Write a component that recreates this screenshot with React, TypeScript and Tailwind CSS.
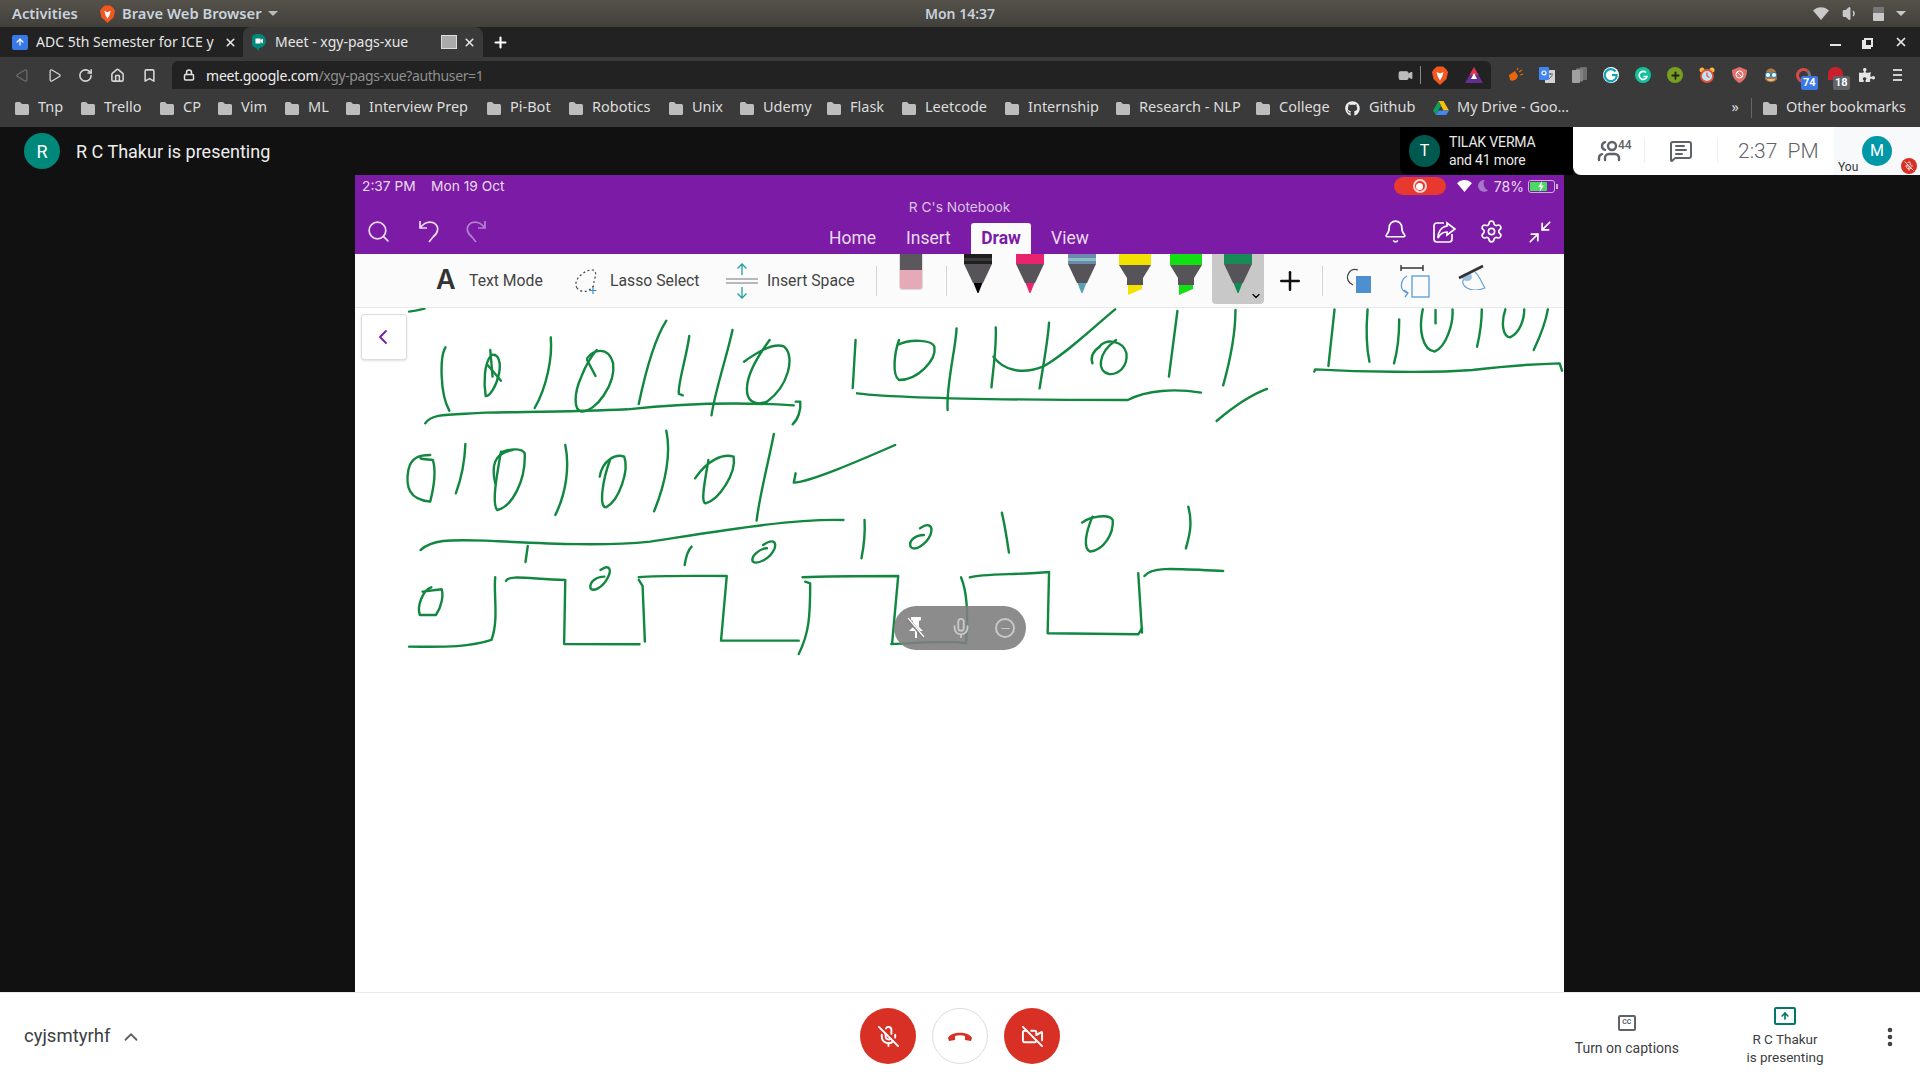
import { Bell, ChevronLeft, ChevronUp, Minimize2, Search, Settings, Plus, X, Lock, Home, Bookmark, RotateCw, Play, MessageSquareText, Users, MicOff, VideoOff, Video, Mic, Minus, Volume1, EllipsisVertical, ArrowUp } from "lucide-react";
import { FaGithub, FaPuzzlePiece } from "react-icons/fa";

const ubuntu = "font-['Noto_Sans',sans-serif]";

const bookmarks = [
	{ name: "Tnp", cls: "w-[43px]" },
	{ name: "Trello", cls: "w-[56px]" },
	{ name: "CP", cls: "w-[35px]" },
	{ name: "Vim", cls: "w-[44px]" },
	{ name: "ML", cls: "w-[38px]" },
	{ name: "Interview Prep", cls: "w-[118px]" },
	{ name: "Pi-Bot", cls: "w-[59px]" },
	{ name: "Robotics", cls: "w-[77px]" },
	{ name: "Unix", cls: "w-[48px]" },
	{ name: "Udemy", cls: "w-[64px]" },
	{ name: "Flask", cls: "w-[52px]" },
	{ name: "Leetcode", cls: "w-[80px]" },
	{ name: "Internship", cls: "w-[88px]" },
	{ name: "Research - NLP", cls: "w-[117px]" },
	{ name: "College", cls: "w-[67px]" },
];

const ZOOM_A = [
	"M50 35 Q70 32 90 26",
	"M145 142 C130 170 130 280 155 332",
	"M262 150 L268 230",
	"M265 165 C285 160 290 190 285 220 C278 260 260 290 250 288 C245 250 245 190 265 165",
	"M255 195 L290 242",
	"M420 112 C425 170 410 260 378 324",
	"M515 175 C530 150 570 135 583 190 C590 250 540 335 500 335 C480 330 480 280 500 230 C510 200 525 170 540 150",
	"M515 180 L537 228",
	"M722 62 C690 120 665 230 650 312",
	"M782 108 C775 170 750 260 755 282 L765 286",
	"M895 90 C880 170 850 270 840 346",
	"M925 185 C950 165 1000 125 1030 140 C1060 170 1040 260 985 305 C950 320 930 300 933 260 C935 220 960 170 992 120",
	"M92 370 C110 340 150 345 250 338 C400 335 500 335 620 328 C750 312 900 305 1055 316",
	"M1060 305 L1072 305 C1075 330 1065 360 1052 373",
	"M105 465 C80 465 55 470 48 510 C40 560 50 600 105 605 C115 560 120 510 112 480 C95 478 85 478 80 475",
	"M197 432 C195 490 185 540 172 580",
	"M320 450 C270 460 265 500 275 550",
	"M290 455 C280 520 265 610 280 630 C320 620 355 540 352 460 C345 445 320 445 295 455",
	"M458 435 C470 500 460 580 432 645",
	"M548 530 C555 480 590 460 612 470 C625 510 600 600 565 622 C545 625 555 540 575 480",
	"M722 392 C735 460 720 550 690 634",
	"M797 535 C830 480 870 460 898 470 C905 520 860 600 825 610 C810 610 825 530 832 480",
	"M1003 402 C990 480 965 590 958 662",
	"M1060 520 L1055 548 C1100 545 1230 480 1320 435",
	"M80 750 C110 720 150 718 250 722 C400 730 550 740 680 725 C850 695 1050 655 1185 660",
	"M360 738 L354 786",
	"M788 740 C775 755 772 780 770 795",
	"M975 735 C1000 715 1010 725 1005 745 C995 775 960 795 948 785 C942 770 965 745 985 745",
	"M1240 660 C1242 700 1238 740 1232 775",
	"M1385 685 C1410 665 1420 680 1412 705 C1400 735 1370 755 1360 740 C1355 720 1375 705 1395 705",
	"M108 862 C85 870 70 920 78 945 L120 945 C135 920 140 885 135 868 L85 875",
	"M275 832 C270 880 285 960 265 1020 C200 1045 120 1040 50 1040",
	"M303 843 C310 825 350 835 458 840 L455 1032 L652 1033",
	"M550 810 C575 790 580 810 568 835 C555 865 530 875 524 865 C520 845 540 830 560 830",
	"M650 840 L660 858 L666 1025",
	"M650 832 C700 826 800 828 880 828 L865 1022 L1068 1022",
	"M1078 832 C1150 828 1250 828 1328 828 L1312 1030",
	"M1085 845 L1098 850 C1098 950 1095 1000 1068 1062",
	"M1492 832 C1510 880 1510 960 1505 1030 C1450 1020 1380 1030 1310 1032",
];

const ZOOM_B = [
	"M33 120 L27 264",
	"M122 135 C150 115 195 120 200 140 C205 180 165 240 125 240 C110 225 115 160 125 120",
	"M247 85 C245 150 225 250 228 330",
	"M36 280 C110 292 250 300 610 300 C650 270 710 265 765 278",
	"M330 82 C332 140 325 200 321 262",
	"M443 68 C440 130 430 200 423 265",
	"M325 170 C345 210 385 225 430 200 C480 160 530 90 583 28",
	"M550 140 C560 115 600 120 607 160 C610 200 590 225 570 222 C545 215 545 160 585 120",
	"M550 140 C535 155 530 170 535 190",
	"M715 33 L697 230",
	"M838 30 C838 100 825 190 812 256",
	"M798 363 C830 325 870 285 905 267",
	"M1048 28 L1035 198",
	"M1118 28 C1115 80 1115 140 1122 185",
	"M1185 58 C1185 110 1180 160 1174 190",
	"M1235 28 C1225 90 1235 150 1260 155 C1285 140 1300 70 1298 28",
	"M1262 30 L1262 70",
	"M1360 28 C1360 70 1355 110 1350 140",
	"M1410 28 C1400 70 1405 110 1420 112 C1440 100 1450 60 1450 28",
	"M1500 28 C1495 70 1480 120 1470 150",
	"M1005 215 L1007 208 C1100 215 1250 220 1340 210 C1400 200 1470 192 1525 190 L1530 212",
	"M343 638 C350 680 355 730 358 758",
	"M513 668 C530 650 570 640 578 660 C580 700 560 750 530 755 C515 745 520 700 535 650",
	"M738 620 C748 670 740 710 733 745",
	"M275 832 C300 820 380 825 443 816 L440 1000 L632 1003 L640 985",
	"M632 820 L640 998",
	"M645 828 C660 800 700 805 812 813",
];

function Folder() {
	return (
		<svg viewBox="0 0 14 13" className="w-[14px] h-[13px] shrink-0" fill="#bdbdbd">
			<path d="M0 1.5 Q0 0 1.5 0 H5 L7 2 H12.5 Q14 2 14 3.5 V11.5 Q14 13 12.5 13 H1.5 Q0 13 0 11.5 Z" />
		</svg>
	);
}

function Brave({ size }: { size: string }) {
	return (
		<svg viewBox="0 0 16 19" className={size}>
			<path d="M2 3 L5 0.5 H11 L14 3 L16 6 L14.5 13 L8 19 L1.5 13 L0 6 Z" fill="#f1571f" />
			<path d="M4.5 6 L8 7.5 L11.5 6 L10 11 L8 14.5 L6 11 Z" fill="#fff" />
		</svg>
	);
}

function Wedge({ size, fill }: { size: string; fill: string }) {
	return (
		<svg viewBox="0 0 16 13" className={size}>
			<path d="M0 3.5 C4.5 -1 11.5 -1 16 3.5 L8 13 Z" fill={fill} />
		</svg>
	);
}

function Pen({ band, tip, wide, mid }: { band: string; tip: string; wide?: boolean; mid?: string }) {
	if (wide) {
		return (
			<svg viewBox="0 0 34 50" className="w-[34px] h-[50px]">
				<rect x="1" y="0" width="32" height="11" fill={band} />
				<path d="M1 11 H33 L25 24 V31 H9 V24 Z" fill="#565458" />
				<path d="M10 31 H24 V35 L10 41 Z" fill={tip} />
			</svg>
		);
	}
	return (
		<svg viewBox="0 0 30 50" className="w-[30px] h-[50px]">
			<rect x="1" y="0" width="28" height="10" fill={band} />
			{mid && <rect x="1" y="4" width="28" height="3" fill={mid} />}
			<path d="M1 10 H29 L20 29 H10 Z" fill="#565458" />
			<path d="M10.5 29 H19.5 L15.5 39 H14.5 Z" fill={tip} />
		</svg>
	);
}

function Ext({ children, badge, badgeCls }: { children: React.ReactNode; badge?: string; badgeCls?: string }) {
	return (
		<div className="relative w-4 h-4 flex items-center justify-center">
			{children}
			{badge && (
				<span className={`absolute left-[6px] top-[9px] h-[14px] px-[2px] rounded-[2px] text-[11px] leading-[14px] font-bold text-white font-['Roboto',sans-serif] ${badgeCls}`}>
					{badge}
				</span>
			)}
		</div>
	);
}

function BookmarkItem({ name, cls }: { name: string; cls: string }) {
	return (
		<div className="flex items-center shrink-0 gap-[9px]">
			<Folder />
			<span className={`${cls} -mt-[2px] whitespace-nowrap`}>{name}</span>
		</div>
	);
}

export default function App() {
	return (
		<div className="w-[1920px] h-[1080px] flex flex-col overflow-hidden bg-[#111111]">
			{/* ubuntu shell bar */}
			<div className={`h-[27px] shrink-0 grid grid-cols-[1fr_auto_1fr] items-center bg-gradient-to-b from-[#55524b] to-[#42403b] text-[#c9d3de] text-[14px] font-semibold ${ubuntu}`}>
				<div className="flex items-center pl-3 text-[14.75px]">
					<span className="w-[88px]">Activities</span>
					<Brave size="w-[15px] h-[18px]" />
					<span className="ml-[7px]">Brave Web Browser</span>
					<span className="ml-[6px] w-0 h-0 border-x-[5px] border-x-transparent border-t-[5px] border-t-[#bbbbbb]" />
				</div>
				<span>Mon 14:37</span>
				<div className="flex items-center justify-end pr-[14px] text-[#c9c9c9]">
					<Wedge size="w-[16px] h-[13px]" fill="#c9c9c9" />
					<Volume1 size={17} className="ml-[13px]" fill="currentColor" />
					<span className="ml-[14px] w-[11px] h-[14px] bg-[linear-gradient(#777_40%,#c9c9c9_40%)] rounded-[1px]" />
					<span className="ml-[12px] w-0 h-0 border-x-[5px] border-x-transparent border-t-[5px] border-t-[#c9c9c9]" />
				</div>
			</div>

			{/* tabs */}
			<div className={`h-[30px] shrink-0 flex items-stretch bg-[#222222] text-[#e6e6e6] text-[14px] ${ubuntu}`}>
				<div className="w-[243px] flex items-center pl-3 relative">
					<div className="w-4 h-[15px] rounded-[2px] bg-[#3b78e7] flex items-center justify-center">
						<ArrowUp size={10} color="#fff" strokeWidth={3} />
					</div>
					<span className="ml-2 -mt-[2px] w-[182px] whitespace-nowrap overflow-hidden">ADC 5th Semester for ICE y</span>
					<X size={13} className="ml-[6px] shrink-0" strokeWidth={3} />
				</div>
				<div className="w-[240px] flex items-center pl-[9px] bg-[#3a3a3a] rounded-t-lg">
					<svg viewBox="0 0 14 17" className="w-[14px] h-[17px]">
						<path d="M7 0 A7 7 0 0 1 7 14 L7 17 L4 14 A7 7 0 0 1 7 0 Z" fill="#00897b" />
						<rect x="3.5" y="4.5" width="5" height="5" fill="#fff" />
						<path d="M8.5 6 L11 4.5 V9.5 L8.5 8 Z" fill="#fff" />
					</svg>
					<span className="ml-[9px] -mt-[2px] w-[166px] whitespace-nowrap">Meet - xgy-pags-xue</span>
					<span className="w-4 h-[14px] border border-[#dddddd] bg-[#aaaaaa]" />
					<X size={13} className="ml-[6px]" strokeWidth={3} />
				</div>
				<Plus size={17} className="ml-[9px] self-center" color="#fff" strokeWidth={3} />
				<div className="ml-auto flex items-center pr-[12px]">
					<span className="w-[11px] h-[2px] mt-[6px] bg-[#e6e6e6]" />
					<span className="ml-[23px] w-[9px] h-[9px] border-2 border-[#e6e6e6] shadow-[-2px_2px_0_#e6e6e6]" />
					<X size={14} className="ml-[21px]" strokeWidth={3} />
				</div>
			</div>

			{/* toolbar */}
			<div className="h-[32px] shrink-0 flex items-end bg-[#3a3a3a] text-[#d6d6d6]">
				<div className="h-[28px] flex items-center pl-[15px] w-[172px]">
					<Play size={15} className="rotate-180 text-[#6e6e6e]" />
					<Play size={15} className="ml-[17px]" />
					<RotateCw size={15} className="ml-4" strokeWidth={2.5} />
					<Home size={15} className="ml-[17px]" strokeWidth={2.5} />
					<Bookmark size={15} className="ml-[17px]" strokeWidth={2.5} />
				</div>
				<div className="h-[28px] w-[1319px] flex items-center rounded-t-md bg-[#222222]">
					<Lock size={12} className="ml-[11px] text-[#e2e2e2]" strokeWidth={3} />
					<span className={`ml-[11px] text-[14px] tracking-[-0.2px] ${ubuntu}`}>
						<span className="text-[#eeeeee]">meet.google.com</span>
						<span className="text-[#8f8f8f] tracking-[-0.4px]">/xgy-pags-xue?authuser=1</span>
					</span>
					<Video size={15} className="ml-auto text-[#bdbdbd]" fill="#bdbdbd" />
					<span className="ml-[7px] w-px h-[18px] bg-[#888888]" />
					<div className="ml-[11px]"><Brave size="w-[16px] h-[19px]" /></div>
					<svg viewBox="0 0 18 16" className="ml-[17px] mr-2 w-[18px] h-4">
						<path d="M9 0 L18 16 H0 Z" fill="#662d91" />
						<path d="M9 0 L13.5 8 H4.5 Z" fill="#e0314b" />
						<path d="M9 6 L12 12 H6 Z" fill="#fff" />
					</svg>
				</div>
				<div className="h-[28px] flex items-center pl-4 gap-4">
					<Ext>
						<svg viewBox="0 0 16 16" className="w-4 h-4" fill="none">
							<path d="M2 8 L8 4 L11 9 C10 13 5 15 3 13 Z" fill="#e8660d" />
							<path d="M10 3 L11 1 M12 5 L15 3 M13 8 L16 7" stroke="#e8660d" strokeWidth="1.2" />
						</svg>
					</Ext>
					<Ext>
						<svg viewBox="0 0 16 16" className="w-4 h-4">
							<rect x="6" y="3" width="10" height="13" fill="#d4d4d4" />
							<path d="M9 7 H14 M11.5 6 V8 M10 12 L13.5 8" stroke="#666" strokeWidth="1" />
							<rect x="0" y="0" width="10" height="13" rx="1" fill="#4285f4" />
							<circle cx="5" cy="6" r="2" fill="none" stroke="#fff" strokeWidth="1.2" />
						</svg>
					</Ext>
					<Ext>
						<svg viewBox="0 0 15 16" className="w-[15px] h-4">
							<rect x="8" y="0" width="7" height="13" rx="1" fill="#6f6f6f" />
							<rect x="4" y="1.5" width="7" height="13" rx="1" fill="#828282" />
							<rect x="0" y="3" width="8" height="13" rx="1" fill="#a0a0a0" />
						</svg>
					</Ext>
					<Ext>
						<svg viewBox="0 0 16 16" className="w-4 h-4" fill="none">
							<circle cx="8" cy="8" r="8" fill="#fff" />
							<path d="M12.5 4.5 A6 6 0 1 0 13.5 10 L13.5 8 H9" stroke="#0fa5b8" strokeWidth="2.2" />
						</svg>
					</Ext>
					<Ext>
						<svg viewBox="0 0 16 16" className="w-4 h-4" fill="none">
							<circle cx="8" cy="8" r="8" fill="#15c39a" />
							<path d="M11 5.5 A4 4 0 1 0 12 9.5 H8.5" stroke="#fff" strokeWidth="1.6" />
						</svg>
					</Ext>
					<Ext><span className="w-4 h-4 rounded-full bg-[#76a01d] flex items-center justify-center"><Plus size={11} strokeWidth={4} color="#222" /></span></Ext>
					<Ext>
						<svg viewBox="0 0 16 16" className="w-4 h-4" fill="none">
							<circle cx="3" cy="3" r="2.5" fill="#f5b93e" />
							<circle cx="13" cy="3" r="2.5" fill="#f5b93e" />
							<circle cx="8" cy="9" r="6" fill="#bfe4f4" stroke="#e8503a" strokeWidth="1.8" />
							<path d="M8 5.5 V9 L10.5 10.5" stroke="#e8503a" strokeWidth="1.2" />
						</svg>
					</Ext>
					<Ext>
						<svg viewBox="0 0 15 16" className="w-[15px] h-4" fill="none">
							<path d="M7.5 0 L15 3 C15 10 12 14 7.5 16 C3 14 0 10 0 3 Z" fill="#e4706c" />
							<circle cx="7.5" cy="7.5" r="3.5" stroke="#fff" strokeWidth="1" />
							<path d="M5 5 L10 10" stroke="#fff" strokeWidth="1" />
						</svg>
					</Ext>
					<Ext>
						<svg viewBox="0 0 14 16" className="w-[14px] h-4" fill="none">
							<path d="M2 6 C2 0 12 0 12 6 L13 12 C11 16 3 16 1 12 Z" fill="#b07a3c" />
							<path d="M3 12 C4 15 10 15 11 12 Z" fill="#e5b98c" />
							<circle cx="4" cy="8" r="2.6" fill="#dff" stroke="#2a78b8" strokeWidth="1" />
							<circle cx="10" cy="8" r="2.6" fill="#dff" stroke="#2a78b8" strokeWidth="1" />
						</svg>
					</Ext>
					<Ext badge="74" badgeCls="bg-[#3b78e7]"><span className="w-[15px] h-[15px] rounded-full border-[3px] border-[#d94a4a] border-r-[#777777]" /></Ext>
					<Ext badge="18" badgeCls="bg-[#5f6368]"><span className="w-[15px] h-[13px] rounded-t-[7px] bg-[#c8202c] -mt-[3px]" /></Ext>
					<Ext><FaPuzzlePiece size={16} color="#e4e4e4" /></Ext>
					<div className="ml-[2px] flex flex-col gap-[3px]">
						<span className="w-[9px] h-[2px] bg-[#cfcfcf]" />
						<span className="w-[9px] h-[2px] bg-[#cfcfcf]" />
						<span className="w-[9px] h-[2px] bg-[#cfcfcf]" />
					</div>
				</div>
			</div>

			{/* bookmarks */}
			<div className={`h-[38px] shrink-0 flex items-center pl-[15px] pr-[14px] bg-[#3a3a3a] text-[#dddddd] text-[14.5px] ${ubuntu}`}>
				{bookmarks.map((b) => (
					<BookmarkItem key={b.name} name={b.name} cls={b.cls} />
				))}
				<FaGithub size={15} className="ml-[-1px] shrink-0" color="#eeeeee" />
				<span className="ml-[9px] -mt-[2px] w-[64px]">Github</span>
				<svg viewBox="0 0 16 14" className="w-4 h-[14px] shrink-0">
					<path d="M5.5 0 H10.5 L16 9.5 H10.5 Z" fill="#f4c20d" />
					<path d="M5.5 0 L8 4.7 L2.7 14 L0 9.5 Z" fill="#0f9d58" />
					<path d="M5.5 9.5 H16 L13.3 14 H2.7 Z" fill="#4285f4" />
				</svg>
				<span className="ml-2 -mt-[2px] w-[111px] whitespace-nowrap">My Drive - Goo…</span>
				<span className="ml-auto -mt-[2px]">»</span>
				<span className="ml-[12px] w-px h-5 bg-[#666666]" />
				<div className="ml-[11px]"><Folder /></div>
				<span className="ml-[9px] -mt-[2px] whitespace-nowrap">Other bookmarks</span>
			</div>

			{/* meet header */}
			<div className="h-[48px] shrink-0 flex items-stretch bg-[#111111] font-['Roboto',sans-serif]">
				<div className="flex items-center pl-6">
					<div className="w-9 h-9 rounded-full bg-[#00897b] text-white text-[18px] flex items-center justify-center">R</div>
					<span className="ml-4 text-[18px] text-[#eeeeee]">R C Thakur is presenting</span>
				</div>
				<div className="ml-auto w-[173px] flex items-center pl-[9px] bg-black rounded-bl-lg">
					<div className="w-[31px] h-[32px] rounded-full bg-[#00594f] text-white text-[16px] flex items-center justify-center">T</div>
					<div className="ml-[9px] text-[14px] leading-[18px] text-[#e8e8e8] tracking-[-0.15px]">
						<div>TILAK VERMA</div>
						<div>and 41 more</div>
					</div>
				</div>
				<div className="w-[347px] flex items-stretch bg-white rounded-bl-lg text-[#5f6368] overflow-hidden">
					<div className="w-[72px] flex items-center justify-center relative border-r border-[#eeeeee] my-3">
						<Users size={24} strokeWidth={2.4} className="-scale-x-100" />
						<span className="absolute left-[45px] top-[-3px] text-[12px] font-medium">44</span>
					</div>
					<div className="w-[73px] flex items-center justify-center border-r border-[#eeeeee] my-3">
						<MessageSquareText size={24} />
					</div>
					<div className="w-[116px] flex items-center pl-5 pt-px text-[21px] font-light whitespace-pre">2:37  PM</div>
					<div className="relative flex-1 bg-[#f8f9fa]">
						<div className="absolute left-[28px] top-[9px] w-[30px] h-[30px] rounded-full bg-[#0097a7] text-white text-[16px] flex items-center justify-center">M</div>
						<span className="absolute left-[4px] top-[31px] text-[12px] text-[#333333]">You</span>
						<div className="absolute left-[67px] top-[31px] w-4 h-4 rounded-full bg-[#d93025] flex items-center justify-center">
							<MicOff size={10} color="#fff" />
						</div>
					</div>
				</div>
			</div>

			{/* shared screen */}
			<div className="flex-1 min-h-0 ml-[355px] w-[1209px] flex flex-col bg-white font-['Inter',sans-serif]">
				<div className="h-[79px] shrink-0 bg-[#7b1ba6] text-[#eadcf1]">
					<div className="h-[22px] flex items-center pl-[7px] pr-[6px] text-[13.75px]">
						<span className="w-[69px]">2:37 PM</span>
						<span>Mon 19 Oct</span>
						<div className="ml-auto w-[52px] h-[18px] rounded-full bg-[#e8392f] flex items-center justify-center">
							<span className="w-[14px] h-[14px] rounded-full border-2 border-[#f8d5d2] flex items-center justify-center">
								<span className="w-[7px] h-[7px] rounded-full bg-white" />
							</span>
						</div>
						<Wedge size="w-[15px] h-[12px] ml-[11px]" fill="#ffffff" />
						<svg viewBox="0 0 12 14" className="ml-[6px] w-[10px] h-[12px]">
							<path d="M8 0 A7 7 0 1 0 12 12 A8 8 0 0 1 8 0 Z" fill="#a878c8" />
						</svg>
						<span className="ml-[6px] text-[14px]">78%</span>
						<div className="ml-[4px] w-[27px] h-[13px] rounded-[3px] border border-[#c9b0d8] p-[1px] relative">
							<div className="w-[17px] h-full rounded-[1px] bg-[#4cd964]" />
							<svg viewBox="0 0 8 12" className="absolute left-[8px] top-0 w-[8px] h-[11px]">
								<path d="M5 0 L1 6.5 H3.5 L2.5 12 L7 5 H4.5 Z" fill="#fff" />
							</svg>
						</div>
						<span className="w-[2px] h-[5px] ml-px bg-[#c9b0d8]" />
					</div>
					<div className="h-[57px] flex flex-col items-stretch relative">
						<div className="h-[23px] flex items-end pb-[1px] justify-center text-[13.75px] text-[#d9c4e4]">R C's Notebook</div>
						<div className="flex-1 flex items-end pl-[11px]">
							<div className="h-[34px] w-[442px] flex items-start -mt-[5px]">
								<Search size={25} strokeWidth={1.6} className="-mt-1" />
								<svg viewBox="0 0 24 24" className="w-[24px] h-[28px] ml-[26px] -mt-[7px]" fill="none" stroke="currentColor" strokeWidth="1.7">
									<path d="M3 3 V10 H10 M3 10 C7 5 12 3 17 5 C23 9 21 15 16 19 L12 24" />
								</svg>
								<svg viewBox="0 0 24 24" className="w-[24px] h-[28px] ml-[23px] -mt-[7px] text-[#b27fd0]" fill="none" stroke="currentColor" strokeWidth="1.7">
									<path d="M21 3 V10 H14 M21 10 C17 5 12 3 7 5 C1 9 3 15 8 19 L12 24" />
								</svg>
							</div>
							<div className="flex items-end h-[34px] text-[17.5px] font-['Roboto',sans-serif]">
								<span className="ml-[21px] w-[77px] h-[34px] pb-[4px] flex items-center">Home</span>
								<span className="w-[65px] h-[34px] pb-[4px] flex items-center">Insert</span>
								<span className="w-[60px] h-[34px] pb-[4px] flex items-center justify-center bg-[#fbfbfb] rounded-t-[3px] text-[#7b1ba6] font-bold">Draw</span>
								<span className="ml-5 h-[34px] pb-[4px] flex items-center">View</span>
							</div>
							<div className="ml-auto flex items-center pr-[11px] gap-[23px] pb-[12px] text-white">
								<Bell size={25} strokeWidth={1.6} className="-translate-x-px" />
								<svg viewBox="0 0 24 24" className="w-[24px] h-[24px]" fill="none" stroke="currentColor" strokeWidth="1.7">
									<path d="M12 3 H5 Q2 3 2 6 V19 Q2 22 5 22 H17 Q20 22 20 19 V14" />
									<path d="M15 3 L23 9 L15 15 V12 C10 12 8 14 6 18 C6 12 9 7 15 6 Z" />
								</svg>
								<Settings size={25} strokeWidth={1.6} />
								<Minimize2 size={26} strokeWidth={1.6} />
							</div>
						</div>
					</div>
				</div>

				<div className="h-[54px] shrink-0 flex items-start bg-[#fbfbfb] border-b border-[#e8e8e8] text-[#444444] text-[15.75px] font-['Roboto',sans-serif] relative z-10">
					<div className="h-[53px] flex items-center pl-[81px]">
						<span className="w-[33px] text-[27px] font-semibold font-['Inter',sans-serif] text-[#333333]">A</span>
						<span className="w-[104px]">Text Mode</span>
						<svg viewBox="0 0 26 26" className="w-[26px] h-[26px]" fill="none">
							<path d="M4 20 C-1 12 12 1 20 2 C26 5 20 11 21 17 C16 25 8 25 4 20" stroke="#444" strokeWidth="1.2" strokeDasharray="2 2.5" />
							<path d="M20 19 V26 M16.5 22.5 H23.5" stroke="#3d8ac9" strokeWidth="1.2" />
						</svg>
						<span className="ml-[11px] w-[116px]">Lasso Select</span>
						<svg viewBox="0 0 32 36" className="w-[32px] h-[36px]" fill="none">
							<path d="M0 16 H32 M0 20 H32" stroke="#777" strokeWidth="1.2" />
							<path d="M16 1 V12 M11.5 5.5 L16 1 L20.5 5.5 M16 24 V35 M11.5 30.5 L16 35 L20.5 30.5" stroke="#1f9f9f" strokeWidth="1.3" />
						</svg>
						<span className="ml-[9px] w-[109px]">Insert Space</span>
						<span className="w-px h-[30px] bg-[#d5d5d5]" />
					</div>
					<div className="ml-[22px] w-[24px] h-[36px] rounded-b-[3px] overflow-hidden border border-[#dcdcdc] border-t-0">
						<div className="h-4 bg-[#5a585c]" />
						<div className="h-5 bg-[#e5a9b8]" />
					</div>
					<span className="ml-[23px] mt-[12px] w-px h-[30px] bg-[#d5d5d5]" />
					<div className="ml-[16px] flex">
						<div className="w-[30px]"><Pen band="#1f1f1f" tip="#000000" mid="#3a3a3a" /></div>
						<div className="ml-[22px] w-[30px]"><Pen band="#e8246f" tip="#e8246f" /></div>
						<div className="ml-[22px] w-[30px]"><Pen band="#6f88b0" tip="#5aa0b0" mid="#86c2c2" /></div>
						<div className="ml-[21px] w-[34px]"><Pen wide band="#f2e200" tip="#f2e200" /></div>
						<div className="ml-[17px] w-[34px]"><Pen wide band="#12e012" tip="#12e012" /></div>
					</div>
					<div className="ml-[9px] w-[52px] h-[50px] rounded-b-[4px] bg-[#c9c8c8] flex justify-center relative">
						<Pen band="#178a57" tip="#0f8a50" />
						<ChevronLeft size={12} className="absolute right-[2px] bottom-[2px] -rotate-90 text-black" strokeWidth={2.5} />
					</div>
					<Plus size={30} strokeWidth={2} className="ml-[11px] mt-[12px] text-[#111111]" />
					<span className="ml-[17px] mt-[12px] w-px h-[30px] bg-[#d5d5d5]" />
					<svg viewBox="0 0 28 26" className="ml-[22px] mt-[14px] w-[28px] h-[26px]" fill="none">
						<path d="M13 2 C5 -1 -1 9 5 15 L8 17" stroke="#444" strokeWidth="1.2" />
						<rect x="11" y="8" width="15" height="17" fill="#4e8fd0" />
					</svg>
					<svg viewBox="0 0 32 34" className="ml-[25px] mt-[10px] w-[32px] h-[34px]" fill="none">
						<path d="M3 1 V7 M25 1 V7 M3 4 H25" stroke="#333" strokeWidth="1.4" />
						<rect x="14" y="12" width="17" height="21" stroke="#5a9bd5" strokeWidth="1.3" />
						<path d="M9 12 C2 16 1 26 9 29 M6 26 L10 29 L7 33" stroke="#5a9bd5" strokeWidth="1.3" />
					</svg>
					<svg viewBox="0 0 30 26" className="ml-[28px] mt-[10px] w-[30px] h-[26px]" fill="none">
						<path d="M8 13 C3 16 4 21 9 24 C16 28 22 26 27 24 C24 20 22 12 17 8" stroke="#6aa7d8" strokeWidth="1.2" />
						<ellipse cx="9" cy="13" rx="5" ry="4" fill="#9dc3e3" />
						<path d="M1 14 L25 2" stroke="#333" strokeWidth="2.6" />
					</svg>
				</div>

				<div className="relative flex-1 min-h-0 bg-white overflow-hidden">
					<svg viewBox="355 308 1209 684" className="absolute inset-0 w-full h-full" fill="none" stroke="#11873f" strokeWidth="2.4" strokeLinecap="round" strokeLinejoin="round">
						<g transform="translate(390 300) scale(0.3827 0.3333)">
							{ZOOM_A.map((d) => (
								<path key={d} d={d} vectorEffect="non-scaling-stroke" />
							))}
						</g>
						<g transform="translate(840 300) scale(0.4719 0.3333)">
							{ZOOM_B.map((d) => (
								<path key={d} d={d} vectorEffect="non-scaling-stroke" />
							))}
						</g>
					</svg>
					<div className="absolute left-[6px] top-[6px] w-[46px] h-[46px] bg-white border border-[#dddddd] rounded-[3px] shadow-sm flex items-center justify-center">
						<ChevronLeft size={24} className="text-[#7b1ba6] -translate-x-px" strokeWidth={1.8} />
					</div>
					<div className="absolute left-[539px] top-[298px] w-[132px] h-[44px] rounded-full bg-[#7f7f7f]/90 flex items-center justify-between pl-3 pr-[11px] text-[#c8c8c8]">
						<svg viewBox="0 0 20 24" className="w-[20px] h-[24px]">
							<path d="M5 1 H15 V4 L13 5 V11 L17 15 H11 V22 H9 V15 H3 L7 11 V5 L5 4 Z" fill="#fff" />
							<path d="M2 3 L18 22" stroke="#808080" strokeWidth="3" />
							<path d="M2 2 L18 21" stroke="#fff" strokeWidth="1.2" />
						</svg>
						<Mic size={22} />
						<div className="w-[20px] h-[20px] rounded-full border-2 border-[#c8c8c8] flex items-center justify-center"><Minus size={13} /></div>
					</div>
				</div>
			</div>

			{/* meet controls */}
			<div className="h-[88px] shrink-0 bg-white border-t border-[#e8eaed] grid grid-cols-[1fr_auto_1fr] items-center font-['Roboto',sans-serif]">
				<div className="flex items-center pl-6 text-[18.5px] text-[#3c4043]">
					<span>cyjsmtyrhf</span>
					<ChevronUp size={22} className="ml-[10px] text-[#5f6368]" />
				</div>
				<div className="flex items-center gap-4 -mt-px">
					<div className="w-14 h-14 rounded-full bg-[#d93025] flex items-center justify-center text-white"><MicOff size={23} /></div>
					<div className="w-14 h-14 rounded-full border border-[#dadce0] flex items-center justify-center">
						<svg viewBox="0 0 24 12" className="w-[24px] h-[12px]" fill="#d93025">
							<path d="M0 8 C3 1 21 1 24 8 L23 11 L17 10 L17 6 C14 5 10 5 7 6 L7 10 L1 11 Z" />
						</svg>
					</div>
					<div className="w-14 h-14 rounded-full bg-[#d93025] flex items-center justify-center text-white"><VideoOff size={23} /></div>
				</div>
				<div className="flex items-center justify-end pr-[18px] text-[13.5px] text-[#3c4043]">
					<div className="flex flex-col items-center">
						<div className="w-[18px] h-[16px] border-2 border-[#5f6368] rounded-[2px] text-[7px] leading-[11px] font-bold text-center text-[#5f6368]">CC</div>
						<span className="mt-[7px] text-[14px]">Turn on captions</span>
					</div>
					<div className="ml-[48px] w-[116px] flex flex-col items-center leading-[18px]">
						<div className="w-[22px] h-[18px] border-2 border-[#00796b] rounded-[2px] flex items-center justify-center mb-[5px]">
							<ArrowUp size={10} color="#00796b" strokeWidth={4} />
						</div>
						<span>R C Thakur</span>
						<span>is presenting</span>
					</div>
					<EllipsisVertical size={24} className="ml-[35px] text-[#3c4043]" strokeWidth={2.6} />
				</div>
			</div>
		</div>
	);
}
